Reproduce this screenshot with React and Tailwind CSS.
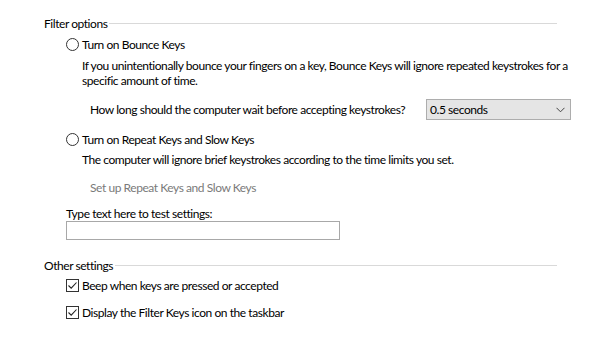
const Radio = () => (
  <span className="w-[13px] h-[13px] rounded-full border border-[#333333] bg-white shrink-0" />
);

const Check = () => (
  <span className="w-[13px] h-[13px] border border-[#333333] bg-white shrink-0 flex items-center justify-center">
    <svg width="11" height="11" viewBox="0 0 11 11">
      <path d="M1.5 5.5 L4.2 8.2 L9.5 2.5" fill="none" stroke="#222" strokeWidth="1.1" />
    </svg>
  </span>
);

const GroupHeader = ({ label, className }) => (
  <div className={`flex items-center h-[16px] mr-[43px] ${className}`}>
    <span>{label}</span>
    <span className="flex-1 h-px bg-[#d9d9d9] ml-[2px] mt-[1px]" />
  </div>
);

export default function App() {
  return (
    <div
      className="w-[600px] h-[355px] bg-white text-black text-[12px] leading-[15px] tracking-[-0.44px] whitespace-nowrap pl-[44px] flex flex-col overflow-hidden"
      style={{ fontFamily: 'Lato, "Noto Sans", sans-serif' }}
    >
      <GroupHeader label="Filter options" className="mt-[15px]" />

      <div className="flex items-center gap-[3px] h-[16px] mt-[5px] ml-[22px]">
        <Radio />
        <span>Turn on Bounce Keys</span>
      </div>

      <p className="mt-[6px] ml-[38px]">
        If you unintentionally bounce your fingers on a key, Bounce Keys will ignore repeated keystrokes for a
        <br />
        specific amount of time.
      </p>

      <div className="flex items-center mt-[11px] ml-[46px] pr-[29px]">
        <span>How long should the computer wait before accepting keystrokes?</span>
        <div className="ml-auto w-[145px] h-[21px] bg-[#e5e5e5] border border-[#adadad] flex items-center pl-[3px] pr-[5px]">
          <span className="flex-1">0.5 seconds</span>
          <svg width="9" height="6" viewBox="0 0 9 6">
            <path d="M0.5 0.8 L4.5 4.8 L8.5 0.8" fill="none" stroke="#444" strokeWidth="1" />
          </svg>
        </div>
      </div>

      <div className="flex items-center gap-[3px] h-[16px] mt-[11px] ml-[22px]">
        <Radio />
        <span>Turn on Repeat Keys and Slow Keys</span>
      </div>

      <p className="mt-[5px] ml-[38px]">The computer will ignore brief keystrokes according to the time limits you set.</p>

      <div className="h-[16px] flex items-center mt-[12px] ml-[46px] text-[#7a7a7a]">Set up Repeat Keys and Slow Keys</div>

      <div className="h-[16px] flex items-center mt-[10px] ml-[22px]">Type text here to test settings:</div>
      <div className="w-[274px] h-[19px] border border-[#a8a8a8] bg-white ml-[22px]" />

      <GroupHeader label="Other settings" className="mt-[17px]" />

      <div className="flex items-center gap-[3px] h-[16px] mt-[4px] ml-[22px]">
        <Check />
        <span>Beep when keys are pressed or accepted</span>
      </div>
      <div className="flex items-center gap-[3px] h-[16px] mt-[11px] ml-[22px]">
        <Check />
        <span>Display the Filter Keys icon on the taskbar</span>
      </div>
    </div>
  );
}
